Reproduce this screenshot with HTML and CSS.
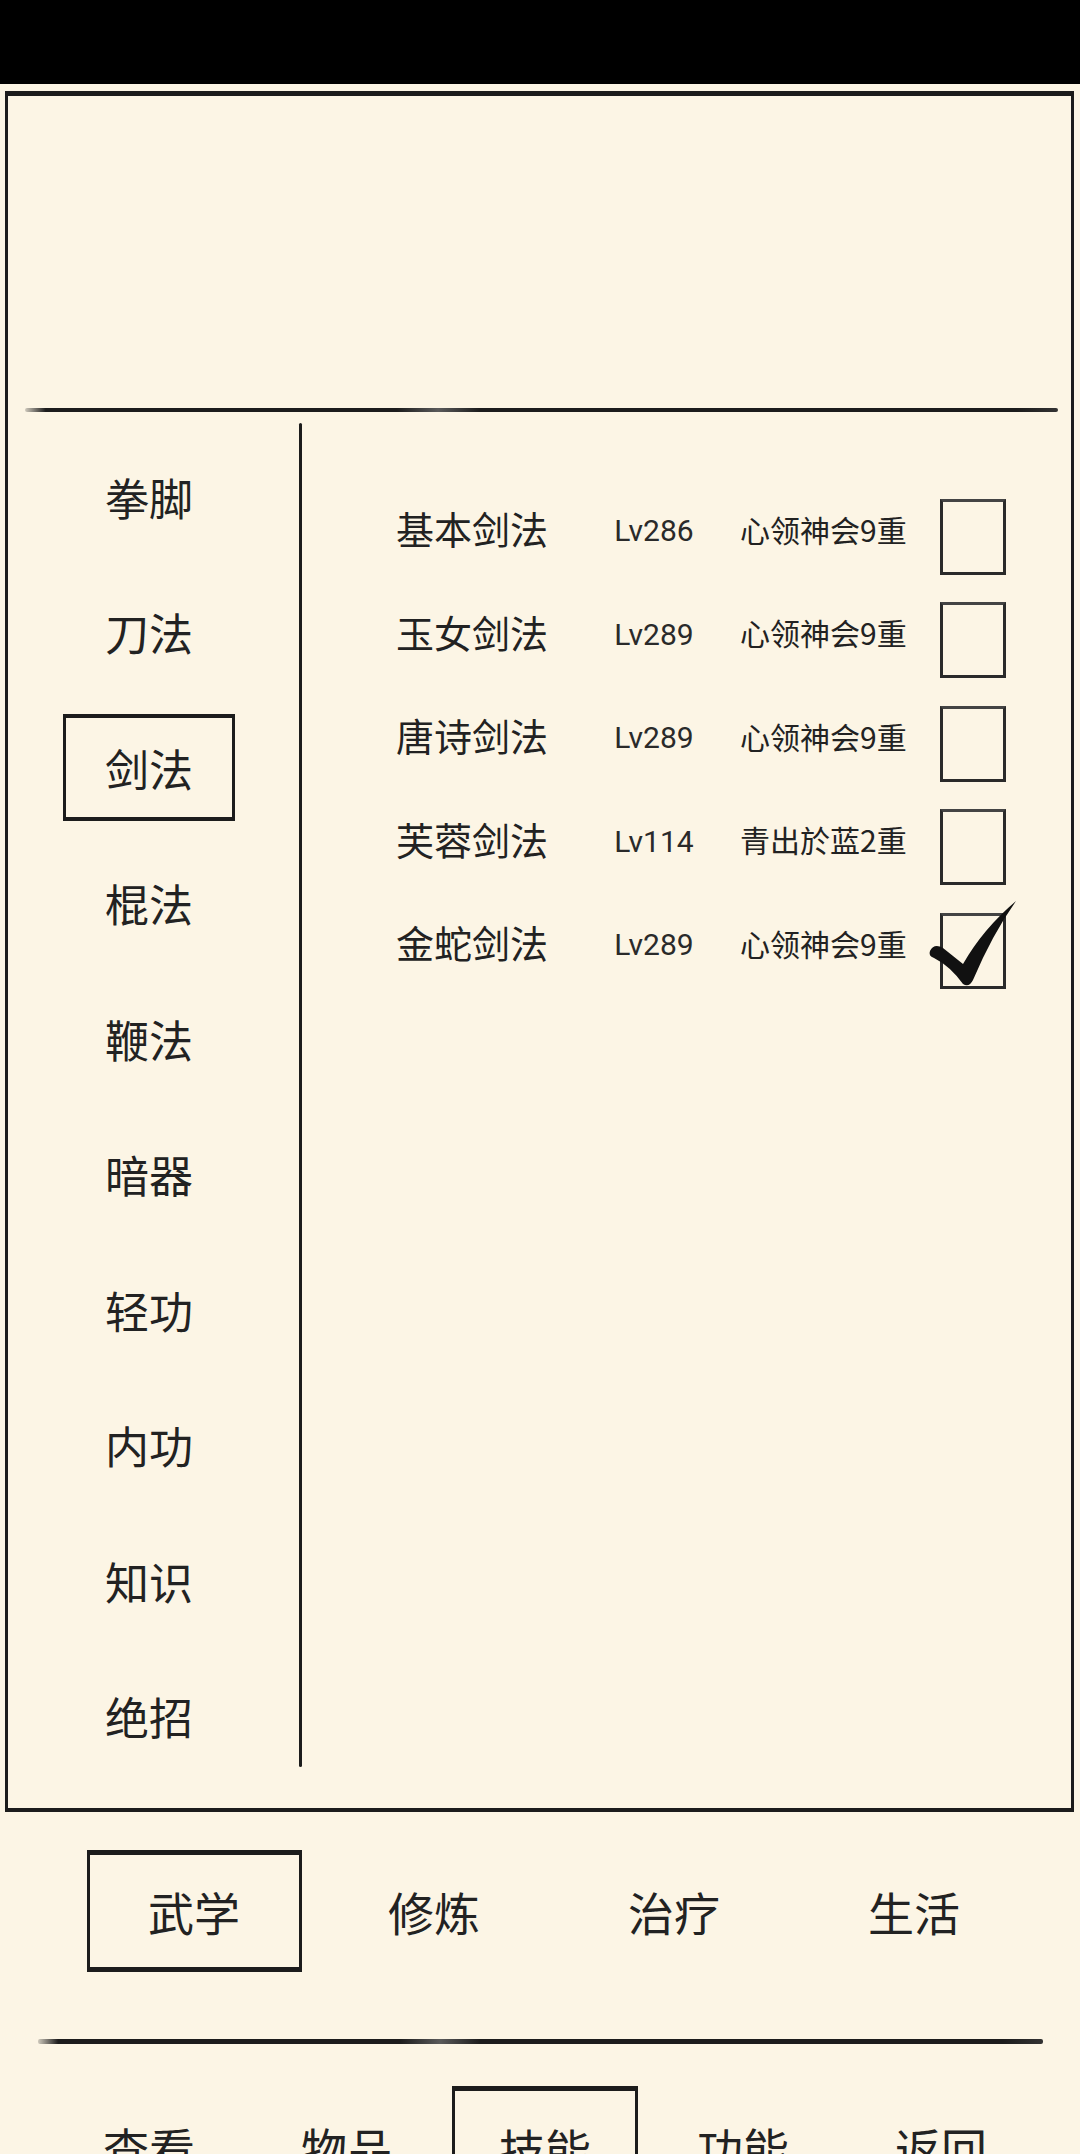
FILE: index.html
```html
<!DOCTYPE html>
<html lang="zh-CN">

<head>
  <meta charset="UTF-8">
  <meta name="viewport" content="width=device-width, initial-scale=1.0">
  <title>技能</title>
  <link rel="stylesheet" href="styles.css">
</head>

<body>
  <!-- 顶部状态栏 -->
  <div class="status-bar"></div>

  <!-- 主面板 -->
  <div class="panel">
    <div class="panel-head"></div>
    <div class="rule"></div>

    <div class="panel-body">
      <!-- 左侧分类 -->
      <ul class="category-list">
        <li><span class="cat">拳脚</span></li>
        <li><span class="cat">刀法</span></li>
        <li><span class="cat active">剑法</span></li>
        <li><span class="cat">棍法</span></li>
        <li><span class="cat">鞭法</span></li>
        <li><span class="cat">暗器</span></li>
        <li><span class="cat">轻功</span></li>
        <li><span class="cat">内功</span></li>
        <li><span class="cat">知识</span></li>
        <li><span class="cat">绝招</span></li>
      </ul>

      <div class="divider"></div>

      <!-- 右侧技能列表 -->
      <div class="skill-list">
        <div class="skill-row">
          <span class="skill-name">基本剑法</span>
          <span class="skill-level">Lv286</span>
          <span class="skill-stage">心领神会9重</span>
          <span class="check"></span>
        </div>
        <div class="skill-row">
          <span class="skill-name">玉女剑法</span>
          <span class="skill-level">Lv289</span>
          <span class="skill-stage">心领神会9重</span>
          <span class="check"></span>
        </div>
        <div class="skill-row">
          <span class="skill-name">唐诗剑法</span>
          <span class="skill-level">Lv289</span>
          <span class="skill-stage">心领神会9重</span>
          <span class="check"></span>
        </div>
        <div class="skill-row">
          <span class="skill-name">芙蓉剑法</span>
          <span class="skill-level">Lv114</span>
          <span class="skill-stage">青出於蓝2重</span>
          <span class="check"></span>
        </div>
        <div class="skill-row">
          <span class="skill-name">金蛇剑法</span>
          <span class="skill-level">Lv289</span>
          <span class="skill-stage">心领神会9重</span>
          <span class="check checked">
            <svg class="tick" viewBox="0 0 90 90" width="90" height="90">
              <path d="M2,52 Q6,44 15,49 L35,65 Q55,30 88,2 Q64,36 45,81 Q41,89 35,85 Q22,67 6,59 Q0,57 2,52 Z" fill="#111" />
            </svg>
          </span>
        </div>
      </div>
    </div>
  </div>

  <!-- 分类标签 -->
  <nav class="tabs">
    <div class="tab"><span class="tab-label active">武学</span></div>
    <div class="tab"><span class="tab-label">修炼</span></div>
    <div class="tab"><span class="tab-label">治疗</span></div>
    <div class="tab"><span class="tab-label">生活</span></div>
  </nav>

  <div class="rule rule-bottom"></div>

  <!-- 底部导航 -->
  <nav class="bottom-nav">
    <div class="nav-item"><span class="nav-label">查看</span></div>
    <div class="nav-item"><span class="nav-label">物品</span></div>
    <div class="nav-item"><span class="nav-label active">技能</span></div>
    <div class="nav-item"><span class="nav-label">功能</span></div>
    <div class="nav-item"><span class="nav-label">返回</span></div>
  </nav>
</body>

</html>
```

FILE: styles.css
```css
/* 基础设置 */
* {
  margin: 0;
  padding: 0;
  box-sizing: border-box;
}

body {
  width: 1080px;
  height: 2154px;
  overflow: hidden;
  background: #fcf5e5;
  color: #222;
  font-family: "Noto Sans CJK SC", "Noto Sans", sans-serif;
}

/* 顶部黑色状态栏 */
.status-bar {
  height: 84px;
  background: #000;
}

/* 主面板：手绘风格边框 */
.panel {
  margin: 7px 6px 0 5px;
  border-style: solid;
  border-color: #1c1c1c;
  border-width: 5px 3px 4px 3px;
}

.panel-head {
  height: 312px;
}

/* 笔刷横线 */
.rule {
  height: 4px;
  margin: 0 13px 0 17px;
  border-radius: 2px;
  background: linear-gradient(90deg, rgba(30, 30, 30, 0.2) 0%, #1c1c1c 2%, #1c1c1c 36%, #5a5a5a 40%, #1c1c1c 44%, #1c1c1c 96%, #333 100%);
}

.panel-body {
  height: 1396px;
  display: flex;
  padding-top: 11px;
  overflow: hidden;
}

/* 左侧分类列表 */
.category-list {
  width: 282px;
  list-style: none;
  padding-top: 6px;
}

.category-list li {
  height: 135.5px;
  display: flex;
  align-items: center;
  justify-content: center;
}

.cat {
  width: 172px;
  height: 107px;
  display: flex;
  align-items: center;
  justify-content: center;
  border: 3px solid transparent;
  font-size: 44px;
}

.cat.active {
  border-color: #1c1c1c;
  border-top-width: 4px;
  border-bottom-width: 4px;
}

.divider {
  width: 3px;
  height: 1344px;
  margin-left: 9px;
  background: #1c1c1c;
  border-radius: 2px;
}

/* 右侧技能列表 */
.skill-list {
  flex: 1;
  padding: 62px 0 0 94px;
}

.skill-row {
  height: 103.5px;
  display: flex;
  align-items: center;
}

.skill-name,
.skill-level,
.skill-stage {
  white-space: nowrap;
}

.skill-name {
  width: 212px;
  margin-bottom: 18px;
  font-size: 38px;
}

.skill-level {
  width: 92px;
  margin-right: 40px;
  margin-bottom: 12px;
  text-align: center;
  font-family: Roboto, "Noto Sans", sans-serif;
  font-size: 30px;
  color: #2a2a2a;
}

.skill-stage {
  width: 200px;
  margin-bottom: 16px;
  font-size: 30px;
}

.check {
  position: relative;
  width: 66px;
  height: 76px;
  border: 3px solid #2a2a2a;
  border-top-color: #444;
}

.tick {
  position: absolute;
  left: -15px;
  top: -17px;
}

/* 分类标签 */
.tabs {
  display: flex;
  margin-top: 38px;
  padding-left: 74px;
}

.tab {
  width: 240px;
  display: flex;
  justify-content: center;
}

.tab-label {
  width: 215px;
  height: 122px;
  display: flex;
  align-items: center;
  justify-content: center;
  border: 3px solid transparent;
  font-size: 46px;
}

.tab-label.active {
  border-color: #1c1c1c;
  border-top-width: 5px;
  border-bottom-width: 5px;
}

.rule-bottom {
  height: 5px;
  margin: 67px 37px 0 38px;
}

/* 底部导航 */
.bottom-nav {
  display: flex;
  margin-top: 42px;
  padding-left: 50px;
}

.nav-item {
  width: 198px;
  display: flex;
  justify-content: center;
}

.nav-label {
  width: 186px;
  height: 122px;
  display: flex;
  align-items: center;
  justify-content: center;
  border: 3px solid transparent;
  font-size: 46px;
}

.nav-label.active {
  border-color: #1c1c1c;
  border-top-width: 5px;
}
```
